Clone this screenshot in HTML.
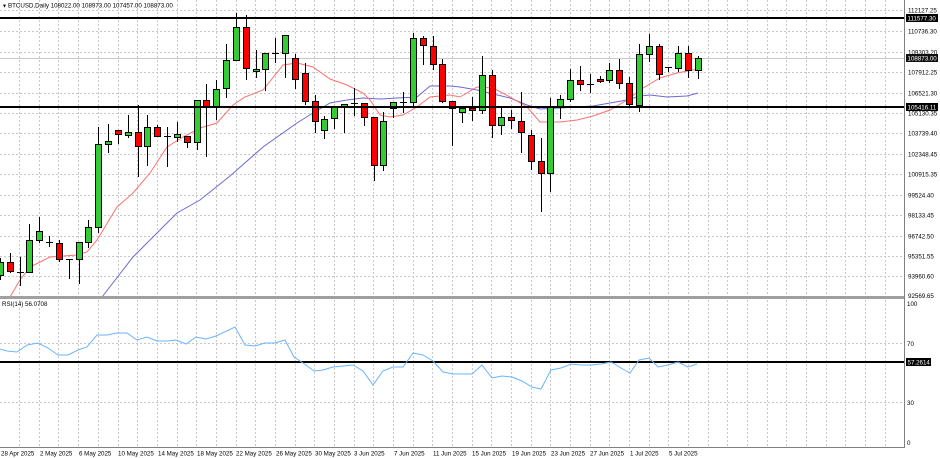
<!DOCTYPE html>
<html><head><meta charset="utf-8"><style>
html,body{margin:0;padding:0;background:#fff;width:940px;height:458px;overflow:hidden}
svg{display:block}
text{font-family:"Liberation Sans",sans-serif;font-size:6.2px;fill:#000}
.g{fill:#32cd32;stroke:#000;stroke-width:1}
.r{fill:#ff0000;stroke:#000;stroke-width:1}
.w{stroke:#000;stroke-width:1}
.gr{stroke:#c8c8c8;stroke-width:1;stroke-dasharray:2,2}
</style></head><body>
<svg width="940" height="458" viewBox="0 0 940 458" xmlns="http://www.w3.org/2000/svg">
<g class="gr">
<path d="M19.5 0V296M39.5 0V296M58.5 0V296M78.5 0V296M98.5 0V296M118.5 0V296M137.5 0V296M157.5 0V296M177.5 0V296M196.5 0V296M216.5 0V296M236.5 0V296M255.5 0V296M275.5 0V296M295.5 0V296M314.5 0V296M334.5 0V296M354.5 0V296M373.5 0V296M393.5 0V296M413.5 0V296M432.5 0V296M452.5 0V296M472.5 0V296M491.5 0V296M511.5 0V296M531.5 0V296M550.5 0V296M570.5 0V296M590.5 0V296M609.5 0V296M629.5 0V296M649.5 0V296M668.5 0V296M688.5 0V296M708.5 0V296M727.5 0V296M747.5 0V296M767.5 0V296M786.5 0V296M806.5 0V296M826.5 0V296M845.5 0V296M865.5 0V296M885.5 0V296"/>
<path d="M19.5 300V447M39.5 300V447M58.5 300V447M78.5 300V447M98.5 300V447M118.5 300V447M137.5 300V447M157.5 300V447M177.5 300V447M196.5 300V447M216.5 300V447M236.5 300V447M255.5 300V447M275.5 300V447M295.5 300V447M314.5 300V447M334.5 300V447M354.5 300V447M373.5 300V447M393.5 300V447M413.5 300V447M432.5 300V447M452.5 300V447M472.5 300V447M491.5 300V447M511.5 300V447M531.5 300V447M550.5 300V447M570.5 300V447M590.5 300V447M609.5 300V447M629.5 300V447M649.5 300V447M668.5 300V447M688.5 300V447M708.5 300V447M727.5 300V447M747.5 300V447M767.5 300V447M786.5 300V447M806.5 300V447M826.5 300V447M845.5 300V447M865.5 300V447M885.5 300V447"/>
<path d="M0 10.5H904M0 31.5H904M0 52.5H904M0 72.5H904M0 93.5H904M0 113.5H904M0 133.5H904M0 154.5H904M0 174.5H904M0 195.5H904M0 215.5H904M0 236.5H904M0 256.5H904M0 276.5H904"/>
<path d="M0 343.5H904M0 402.5H904"/>
</g>
<line x1="0" y1="58.5" x2="904" y2="58.5" stroke="#c8c8c8"/>
<polyline fill="none" stroke="#6a6ad0" stroke-width="1" points="102,297 133,257 177,213 200,200 230,176 263,147 297,123 313,113 330,103 347,100 363,98 380,99 397,98 417,97 430,86 450,86 460,87 477,90 493,94 510,98 527,105 540,109 560,108 577,107 593,106 610,103 627,100 640,96 650,95 667,97 687,96 698,93"/>
<polyline fill="none" stroke="#ff7070" stroke-width="1" points="10,297 20,280 30,267 50,257 77,255 87,252 97,240 117,207 133,193 150,173 167,147 183,137 200,128 217,123 233,105 245,97 263,90 283,65 297,63 313,67 330,79 347,85 363,93 370,100 380,115 390,117 403,115 417,107 430,97 450,95 460,97 477,87 493,88 510,97 527,107 540,122 560,122 577,120 593,116 610,110 627,100 643,88 660,78 677,73 693,70 700,69"/>
<g>
<line class="w" x1="0.5" y1="258" x2="0.5" y2="280"/><rect class="g" x="-2.5" y="262.5" width="6" height="13"/>
<line class="w" x1="10.5" y1="253" x2="10.5" y2="273"/><rect class="r" x="7.5" y="262.5" width="6" height="9"/>
<line class="w" x1="20.5" y1="257" x2="20.5" y2="286"/><line class="w" x1="17" y1="272.5" x2="24" y2="272.5"/>
<line class="w" x1="29.5" y1="224" x2="29.5" y2="273"/><rect class="g" x="26.5" y="240.5" width="6" height="32"/>
<line class="w" x1="39.5" y1="217" x2="39.5" y2="243"/><rect class="g" x="36.5" y="231.5" width="6" height="9"/>
<line class="w" x1="49.5" y1="236" x2="49.5" y2="247"/><line class="w" x1="46" y1="242.5" x2="53" y2="242.5"/>
<line class="w" x1="59.5" y1="240" x2="59.5" y2="262"/><rect class="r" x="56.5" y="243.5" width="6" height="16"/>
<line class="w" x1="69.5" y1="259" x2="69.5" y2="279"/><line class="w" x1="66" y1="259.5" x2="73" y2="259.5"/>
<line class="w" x1="79.5" y1="242" x2="79.5" y2="284"/><rect class="g" x="76.5" y="242.5" width="6" height="17"/>
<line class="w" x1="88.5" y1="220" x2="88.5" y2="248"/><rect class="g" x="85.5" y="227.5" width="6" height="15"/>
<line class="w" x1="98.5" y1="127" x2="98.5" y2="233"/><rect class="g" x="95.5" y="144.5" width="6" height="83"/>
<line class="w" x1="108.5" y1="124" x2="108.5" y2="153"/><rect class="g" x="105.5" y="141.5" width="6" height="3"/>
<line class="w" x1="118.5" y1="130" x2="118.5" y2="144"/><rect class="r" x="115.5" y="130.5" width="6" height="4"/>
<line class="w" x1="128.5" y1="115" x2="128.5" y2="138"/><rect class="g" x="125.5" y="132.5" width="6" height="3"/>
<line class="w" x1="138.5" y1="105" x2="138.5" y2="177"/><rect class="r" x="135.5" y="132.5" width="6" height="14"/>
<line class="w" x1="147.5" y1="115" x2="147.5" y2="166"/><rect class="g" x="144.5" y="127.5" width="6" height="19"/>
<line class="w" x1="157.5" y1="125" x2="157.5" y2="137"/><rect class="r" x="154.5" y="127.5" width="6" height="9"/>
<line class="w" x1="167.5" y1="127" x2="167.5" y2="167"/><line class="w" x1="164" y1="136.5" x2="171" y2="136.5"/>
<line class="w" x1="177.5" y1="122" x2="177.5" y2="142"/><rect class="g" x="174.5" y="134.5" width="6" height="3"/>
<line class="w" x1="187.5" y1="136" x2="187.5" y2="148"/><rect class="r" x="184.5" y="136.5" width="6" height="6"/>
<line class="w" x1="197.5" y1="100" x2="197.5" y2="150"/><rect class="g" x="194.5" y="100.5" width="6" height="42"/>
<line class="w" x1="206.5" y1="84" x2="206.5" y2="157"/><rect class="r" x="203.5" y="100.5" width="6" height="6"/>
<line class="w" x1="216.5" y1="80" x2="216.5" y2="120"/><rect class="g" x="213.5" y="89.5" width="6" height="17"/>
<line class="w" x1="226.5" y1="44" x2="226.5" y2="98"/><rect class="g" x="223.5" y="60.5" width="6" height="28"/>
<line class="w" x1="236.5" y1="13" x2="236.5" y2="60"/><rect class="g" x="233.5" y="27.5" width="6" height="33"/>
<line class="w" x1="246.5" y1="15" x2="246.5" y2="80"/><rect class="r" x="243.5" y="27.5" width="6" height="41"/>
<line class="w" x1="256.5" y1="50" x2="256.5" y2="78"/><rect class="g" x="253.5" y="69.5" width="6" height="2"/>
<line class="w" x1="265.5" y1="53" x2="265.5" y2="91"/><rect class="g" x="262.5" y="53.5" width="6" height="16"/>
<line class="w" x1="275.5" y1="38" x2="275.5" y2="63"/><line class="w" x1="272" y1="53.5" x2="279" y2="53.5"/>
<line class="w" x1="285.5" y1="35" x2="285.5" y2="78"/><rect class="g" x="282.5" y="35.5" width="6" height="18"/>
<line class="w" x1="295.5" y1="54" x2="295.5" y2="89"/><rect class="r" x="292.5" y="58.5" width="6" height="21"/>
<line class="w" x1="305.5" y1="63" x2="305.5" y2="105"/><rect class="r" x="302.5" y="73.5" width="6" height="28"/>
<line class="w" x1="315.5" y1="95" x2="315.5" y2="133"/><rect class="r" x="312.5" y="101.5" width="6" height="20"/>
<line class="w" x1="324.5" y1="116" x2="324.5" y2="139"/><rect class="g" x="321.5" y="119.5" width="6" height="11"/>
<line class="w" x1="334.5" y1="106" x2="334.5" y2="129"/><rect class="g" x="331.5" y="106.5" width="6" height="12"/>
<line class="w" x1="344.5" y1="104" x2="344.5" y2="133"/><rect class="g" x="341.5" y="104.5" width="6" height="2"/>
<line class="w" x1="354.5" y1="88" x2="354.5" y2="116"/><line class="w" x1="351" y1="103.5" x2="358" y2="103.5"/>
<line class="w" x1="364.5" y1="103" x2="364.5" y2="126"/><rect class="r" x="361.5" y="103.5" width="6" height="14"/>
<line class="w" x1="374.5" y1="117" x2="374.5" y2="181"/><rect class="r" x="371.5" y="117.5" width="6" height="48"/>
<line class="w" x1="383.5" y1="112" x2="383.5" y2="171"/><rect class="g" x="380.5" y="121.5" width="6" height="44"/>
<line class="w" x1="393.5" y1="102" x2="393.5" y2="118"/><rect class="g" x="390.5" y="102.5" width="6" height="6"/>
<line class="w" x1="403.5" y1="92" x2="403.5" y2="113"/><line class="w" x1="400" y1="102.5" x2="407" y2="102.5"/>
<line class="w" x1="413.5" y1="33" x2="413.5" y2="107"/><rect class="g" x="410.5" y="38.5" width="6" height="64"/>
<line class="w" x1="423.5" y1="36" x2="423.5" y2="65"/><rect class="r" x="420.5" y="38.5" width="6" height="7"/>
<line class="w" x1="433.5" y1="36" x2="433.5" y2="70"/><rect class="r" x="430.5" y="46.5" width="6" height="18"/>
<line class="w" x1="442.5" y1="59" x2="442.5" y2="103"/><rect class="r" x="439.5" y="64.5" width="6" height="37"/>
<line class="w" x1="452.5" y1="101" x2="452.5" y2="146"/><rect class="r" x="449.5" y="101.5" width="6" height="7"/>
<line class="w" x1="462.5" y1="108" x2="462.5" y2="123"/><rect class="g" x="459.5" y="108.5" width="6" height="4"/>
<line class="w" x1="472.5" y1="97" x2="472.5" y2="121"/><rect class="r" x="469.5" y="108.5" width="6" height="2"/>
<line class="w" x1="482.5" y1="56" x2="482.5" y2="114"/><rect class="g" x="479.5" y="75.5" width="6" height="35"/>
<line class="w" x1="492.5" y1="70" x2="492.5" y2="138"/><rect class="r" x="489.5" y="75.5" width="6" height="50"/>
<line class="w" x1="501.5" y1="106" x2="501.5" y2="135"/><rect class="g" x="498.5" y="117.5" width="6" height="8"/>
<line class="w" x1="511.5" y1="110" x2="511.5" y2="129"/><rect class="r" x="508.5" y="117.5" width="6" height="3"/>
<line class="w" x1="521.5" y1="92" x2="521.5" y2="153"/><rect class="r" x="518.5" y="121.5" width="6" height="11"/>
<line class="w" x1="531.5" y1="130" x2="531.5" y2="170"/><rect class="r" x="528.5" y="135.5" width="6" height="26"/>
<line class="w" x1="541.5" y1="138" x2="541.5" y2="212"/><rect class="r" x="538.5" y="161.5" width="6" height="12"/>
<line class="w" x1="550.5" y1="98" x2="550.5" y2="192"/><rect class="g" x="547.5" y="106.5" width="6" height="67"/>
<line class="w" x1="560.5" y1="95" x2="560.5" y2="119"/><rect class="g" x="557.5" y="99.5" width="6" height="7"/>
<line class="w" x1="570.5" y1="69" x2="570.5" y2="102"/><rect class="g" x="567.5" y="80.5" width="6" height="19"/>
<line class="w" x1="580.5" y1="66" x2="580.5" y2="91"/><rect class="r" x="577.5" y="80.5" width="6" height="4"/>
<line class="w" x1="590.5" y1="74" x2="590.5" y2="93"/><line class="w" x1="587" y1="84.5" x2="594" y2="84.5"/>
<line class="w" x1="600.5" y1="76" x2="600.5" y2="83"/><rect class="r" x="597.5" y="79.5" width="6" height="2"/>
<line class="w" x1="609.5" y1="63" x2="609.5" y2="83"/><rect class="g" x="606.5" y="70.5" width="6" height="10"/>
<line class="w" x1="619.5" y1="59" x2="619.5" y2="89"/><rect class="r" x="616.5" y="70.5" width="6" height="13"/>
<line class="w" x1="629.5" y1="77" x2="629.5" y2="107"/><rect class="r" x="626.5" y="83.5" width="6" height="21"/>
<line class="w" x1="639.5" y1="44" x2="639.5" y2="112"/><rect class="g" x="636.5" y="54.5" width="6" height="51"/>
<line class="w" x1="649.5" y1="34" x2="649.5" y2="62"/><rect class="g" x="646.5" y="46.5" width="6" height="8"/>
<line class="w" x1="659.5" y1="44" x2="659.5" y2="80"/><rect class="r" x="656.5" y="46.5" width="6" height="28"/>
<line class="w" x1="668.5" y1="67" x2="668.5" y2="72"/><line class="w" x1="665" y1="67.5" x2="672" y2="67.5"/>
<line class="w" x1="678.5" y1="46" x2="678.5" y2="72"/><rect class="g" x="675.5" y="53.5" width="6" height="15"/>
<line class="w" x1="688.5" y1="46" x2="688.5" y2="78"/><rect class="r" x="685.5" y="53.5" width="6" height="17"/>
<line class="w" x1="698.5" y1="56" x2="698.5" y2="79"/><rect class="g" x="695.5" y="58.5" width="6" height="12"/>
</g>
<rect x="0" y="17" width="905" height="2" fill="#000"/>
<rect x="0" y="106" width="905" height="2" fill="#000"/>
<rect x="0" y="361" width="905" height="2" fill="#000"/>
<polyline fill="none" stroke="#6ab4ff" stroke-width="1" points="0,349 7,351 17,352 27,345 38,343 48,348 58,355 68,355 78,350 87,347 97,335 107,335 117,333 127,333 137,340 147,337 157,341 167,341 176,340 186,344 196,337 206,339 216,336 235,327 245,345 255,346 265,343 275,343 285,340 294,357 303,363 314,371 323,370 333,367 343,366 353,365 363,371 373,385 383,371 393,367 403,367 413,353 423,355 433,361 443,372 453,374 463,374 472,374 482,365 492,378 502,376 512,377 522,381 532,387 541,389 551,370 561,368 571,364 581,365 591,365 601,364 611,362 621,368 630,373 639,360 649,358 658,367 668,365 678,362 688,367 697,364"/>
<rect x="0" y="296" width="905" height="3" fill="#a0a0a0"/>
<line x1="904.5" y1="0" x2="904.5" y2="448" stroke="#808080"/>
<line x1="0" y1="447.5" x2="905" y2="447.5" stroke="#808080"/>
<text x="2" y="7.5" style="font-size:5px">▼</text>
<text x="8" y="7.5">BTCUSD,Daily  108022.00 108973.00 107457.00 108873.00</text>
<text x="2" y="306">RSI(14) 56.0708</text>
<g>
<text x="908" y="12.5">112127.25</text>
<text x="908" y="33.5">110736.30</text>
<text x="908" y="54.5">109303.20</text>
<text x="908" y="74.5">107912.25</text>
<text x="908" y="95.5">106521.30</text>
<text x="908" y="115.5">105130.35</text>
<text x="908" y="135.5">103739.40</text>
<text x="908" y="156.5">102348.45</text>
<text x="908" y="176.5">100915.35</text>
<text x="908" y="197.5">99524.40</text>
<text x="908" y="217.5">98133.45</text>
<text x="908" y="238.5">96742.50</text>
<text x="908" y="258.5">95351.55</text>
<text x="908" y="278.5">93960.60</text>
<text x="908" y="298">92569.65</text>
<text x="907" y="306">100</text>
<text x="907" y="346">70</text>
<text x="907" y="405">30</text>
<text x="907" y="445">0</text>
</g>
<rect x="906" y="14" width="32" height="8" fill="#000"/><text x="907.5" y="20.3" style="fill:#fff">111577.30</text>
<rect x="906" y="54" width="32" height="8" fill="#111"/><text x="907.5" y="60.3" style="fill:#fff">108873.00</text>
<rect x="906" y="103" width="32" height="8" fill="#000"/><text x="907.5" y="109.3" style="fill:#fff">105416.11</text>
<rect x="906" y="358" width="25" height="8" fill="#000"/><text x="907.5" y="364.3" style="fill:#fff">57.2614</text>
<g>
<text x="1" y="455.5">28 Apr 2025</text>
<text x="40" y="455.5">2 May 2025</text>
<text x="79" y="455.5">6 May 2025</text>
<text x="118" y="455.5">10 May 2025</text>
<text x="158" y="455.5">14 May 2025</text>
<text x="197" y="455.5">18 May 2025</text>
<text x="236" y="455.5">22 May 2025</text>
<text x="276" y="455.5">26 May 2025</text>
<text x="315" y="455.5">30 May 2025</text>
<text x="354" y="455.5">3 Jun 2025</text>
<text x="394" y="455.5">7 Jun 2025</text>
<text x="433" y="455.5">11 Jun 2025</text>
<text x="472" y="455.5">15 Jun 2025</text>
<text x="512" y="455.5">19 Jun 2025</text>
<text x="551" y="455.5">23 Jun 2025</text>
<text x="590" y="455.5">27 Jun 2025</text>
<text x="630" y="455.5">1 Jul 2025</text>
<text x="669" y="455.5">5 Jul 2025</text>
</g>
</svg>
</body></html>
